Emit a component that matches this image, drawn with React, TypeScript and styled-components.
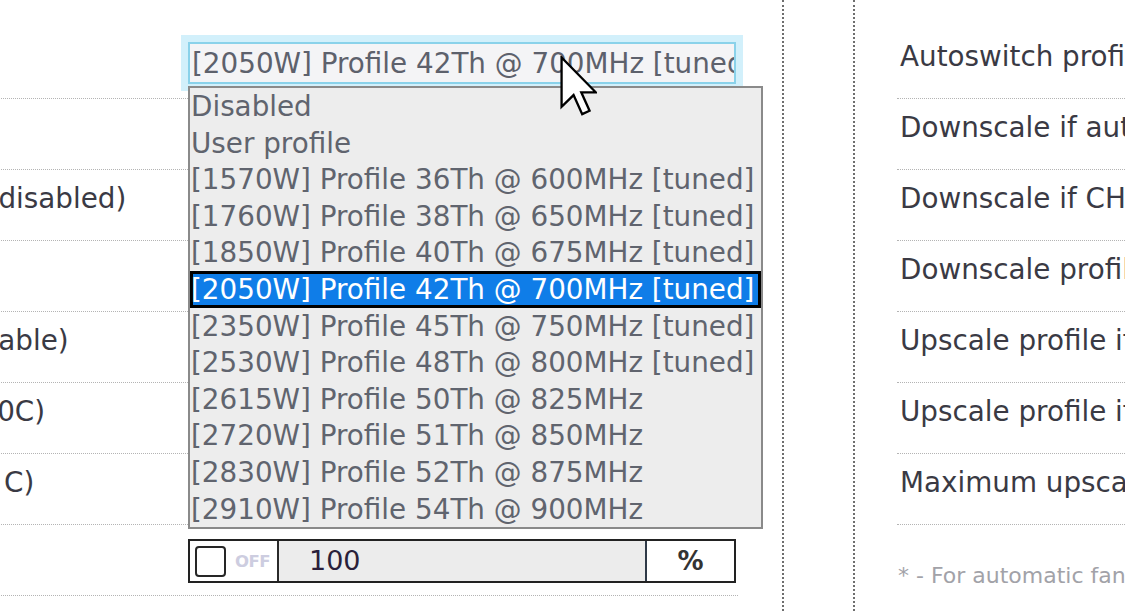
import React from "react";
import styled, { createGlobalStyle } from "styled-components";

const GlobalStyle = createGlobalStyle`
  html, body { margin: 0; padding: 0; background: #ffffff; overflow: hidden; }
  body { font-family: "DejaVu Sans", Verdana, sans-serif; }
  #root { width: 1125px; height: 611px; overflow: hidden; }
`;

const Page = styled.div`
  display: flex;
  width: 1125px;
  height: 611px;
  overflow: hidden;
  background: #fff;
`;

const LeftPanel = styled.section`
  flex: none;
  width: 782px;
  padding-top: 28px;
  border-right: 2px dotted #6e6e6e;
`;

const Gutter = styled.div`
  flex: none;
  width: 69px;
  border-right: 2px dotted #6e6e6e;
`;

const RightPanel = styled.section`
  flex: 1;
  min-width: 0;
  padding-top: 28px;
  padding-left: 42px;
  overflow: hidden;
`;

const SettingRow = styled.div`
  display: grid;
  grid-template-columns: 450px 548px;
  width: 1000px;
  margin-left: -262px;
  height: 71px;
  box-sizing: border-box;
  border-bottom: 1px dotted #b4b4b4;
`;

const Label = styled.div`
  padding-top: 12px;
  font-size: 27.8px;
  line-height: 34px;
  color: #3a3a44;
  white-space: nowrap;
`;

const ControlCell = styled.div`
  padding-top: 14px;
`;

const SelectWrap = styled.div`
  position: relative;
  width: 548px;
`;

const SelectBox = styled.div`
  width: 548px;
  height: 42px;
  box-sizing: border-box;
  border: 2px solid #8ad2ea;
  box-shadow: 0 0 0 7px #d2f0fb;
  background: #f4f4f6;
  padding-left: 2px;
  font-size: 27.8px;
  line-height: 40px;
  color: #5d616c;
  white-space: nowrap;
  overflow: hidden;
`;

const DropList = styled.ul`
  position: absolute;
  z-index: 5;
  left: 0;
  top: 44px;
  width: 575px;
  margin: 0;
  padding: 0;
  list-style: none;
  box-sizing: border-box;
  border: 2px solid #8a8a8a;
  background: #ededed;
`;

const Option = styled.li<{ $selected?: boolean }>`
  height: 36.6px;
  box-sizing: border-box;
  padding-left: 1px;
  font-size: 27.8px;
  line-height: 37.6px;
  white-space: nowrap;
  color: ${(p) => (p.$selected ? "#ffffff" : "#60646e")};
  background: ${(p) => (p.$selected ? "#0f7de8" : "transparent")};
  box-shadow: ${(p) => (p.$selected ? "inset 0 0 0 3px #000" : "none")};
`;

const Cursor = styled.svg`
  position: absolute;
  z-index: 10;
  left: 372px;
  top: 14px;
`;

const PercentField = styled.div`
  display: flex;
  width: 548px;
  height: 44px;
  box-sizing: border-box;
  border: 2px solid #222;
`;

const TogglePart = styled.div`
  display: flex;
  align-items: center;
  gap: 9px;
  flex: none;
  width: 89px;
  padding-left: 5px;
  box-sizing: border-box;
  background: #fff;
  border-right: 2px solid #2a2a2a;
`;

const CheckSquare = styled.span`
  display: block;
  width: 31px;
  height: 31px;
  box-sizing: border-box;
  border: 2px solid #262626;
  border-radius: 4px;
  background: #fff;
`;

const OffText = styled.span`
  font-size: 16.5px;
  font-weight: bold;
  color: #cdcde0;
  letter-spacing: -0.5px;
`;

const NumberPart = styled.div`
  flex: 1;
  background: #ececec;
  padding-left: 30px;
  font-size: 27px;
  line-height: 40px;
  color: #2a1f3a;
`;

const UnitPart = styled.div`
  flex: none;
  width: 89px;
  box-sizing: border-box;
  border-left: 2px solid #2f3a48;
  background: #fff;
  text-align: center;
  font-size: 26px;
  font-weight: bold;
  line-height: 40px;
  color: #333;
`;

const RightRow = styled.div`
  height: 71px;
  box-sizing: border-box;
  border-bottom: 1px dotted #b4b4b4;
  padding-top: 12px;
  padding-left: 3px;
  font-size: 27.8px;
  line-height: 34px;
  color: #3a3a44;
  white-space: nowrap;
  overflow: hidden;
`;

const Footnote = styled.p`
  margin: 38px 0 0;
  padding-left: 1px;
  font-size: 22px;
  line-height: 26px;
  color: #a2a2a8;
  white-space: nowrap;
`;

const options = [
  "Disabled",
  "User profile",
  "[1570W] Profile 36Th @ 600MHz [tuned]",
  "[1760W] Profile 38Th @ 650MHz [tuned]",
  "[1850W] Profile 40Th @ 675MHz [tuned]",
  "[2050W] Profile 42Th @ 700MHz [tuned]",
  "[2350W] Profile 45Th @ 750MHz [tuned]",
  "[2530W] Profile 48Th @ 800MHz [tuned]",
  "[2615W] Profile 50Th @ 825MHz",
  "[2720W] Profile 51Th @ 850MHz",
  "[2830W] Profile 52Th @ 875MHz",
  "[2910W] Profile 54Th @ 900MHz",
];

const selectedIndex = 5;

const leftLabels = [
  "Preset",
  "Frequency",
  "Min fan speed (0 - disabled)",
  "Fan mode",
  "Fans speed (0 - disable)",
  "Target temp. (60-80C)",
  "Max temp (90-100 C)",
  "Power limit",
];

const rightLabels = [
  "Autoswitch profile on start",
  "Downscale if autotune failed",
  "Downscale if CHIP temp is high",
  "Downscale profile on error",
  "Upscale profile if temp is low",
  "Upscale profile if stable",
  "Maximum upscale profile",
];

function ProfileSelect() {
  return (
    <SelectWrap>
      <SelectBox>{options[selectedIndex]}</SelectBox>
      <DropList>
        {options.map((o, i) => (
          <Option key={o} $selected={i === selectedIndex}>
            {o}
          </Option>
        ))}
      </DropList>
      <Cursor width="37" height="60" viewBox="0 0 12 19.5">
        <path
          d="M0.5 0.5 L0.5 16.5 L4.4 12.7 L7.2 18.9 L9.6 17.8 L6.9 11.8 L11.6 11.8 Z"
          fill="#ffffff"
          stroke="#000000"
          strokeWidth="0.75"
          strokeLinejoin="miter"
        />
      </Cursor>
    </SelectWrap>
  );
}

function PowerInput() {
  return (
    <PercentField>
      <TogglePart>
        <CheckSquare />
        <OffText>OFF</OffText>
      </TogglePart>
      <NumberPart>100</NumberPart>
      <UnitPart>%</UnitPart>
    </PercentField>
  );
}

export default function App() {
  return (
    <>
      <GlobalStyle />
      <Page>
        <LeftPanel>
          {leftLabels.map((label, i) => (
            <SettingRow key={label}>
              <Label>{label}</Label>
              <ControlCell>
                {i === 0 && <ProfileSelect />}
                {i === leftLabels.length - 1 && <PowerInput />}
              </ControlCell>
            </SettingRow>
          ))}
        </LeftPanel>
        <Gutter />
        <RightPanel>
          {rightLabels.map((l) => (
            <RightRow key={l}>{l}</RightRow>
          ))}
          <Footnote>* - For automatic fan control only</Footnote>
        </RightPanel>
      </Page>
    </>
  );
}
